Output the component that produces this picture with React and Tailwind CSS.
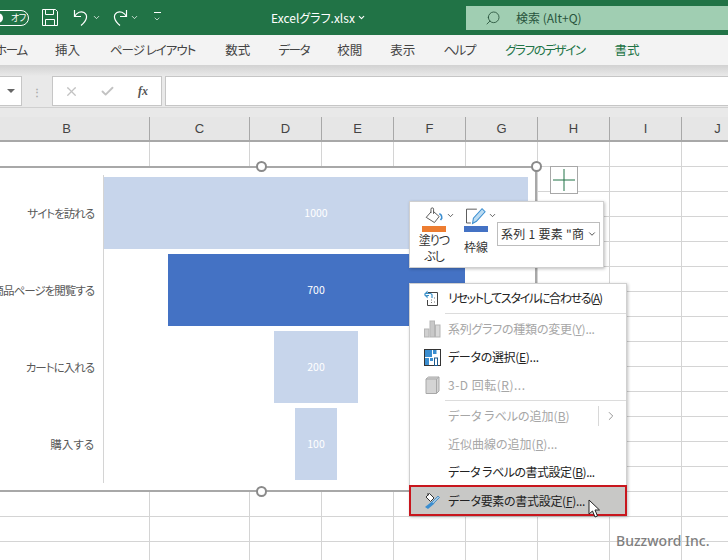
import React from "react";
import { ChevronDown, ChevronRight, Search, X, Check } from "lucide-react";

const columns = [
  { name: "B", width: "w-[150px]", align: "pr-[16px]" },
  { name: "C", width: "w-[100px]" },
  { name: "D", width: "w-[72px]" },
  { name: "E", width: "w-[72px]" },
  { name: "F", width: "w-[72px]" },
  { name: "G", width: "w-[72px]" },
  { name: "H", width: "w-[72px]" },
  { name: "I", width: "w-[72px]" },
  { name: "J", width: "w-[72px]" },
];

const tabs = [
  { text: "ホーム", cls: "tracking-[-1.3px]" },
  { text: "挿入" },
  { text: "ページ レイアウト", cls: "ml-[2px] tracking-[-1px]" },
  { text: "数式", cls: "ml-[2px]" },
  { text: "データ", cls: "tracking-[-1.3px]" },
  { text: "校閲" },
  { text: "表示" },
  { text: "ヘルプ", cls: "tracking-[-1.3px]" },
  { text: "グラフのデザイン", cls: "ml-[2px] tracking-[-1.4px] text-[#217346]" },
  { text: "書式", cls: "ml-[2px] text-[#217346]" },
];

const bars = [
  { label: "サイトを訪れる", value: 1000, cls: "w-[424px] bg-[#c7d5eb]", track: "tracking-[-1px]" },
  { label: "商品ページを閲覧する", value: 700, cls: "w-[297px] bg-[#4472c4]", track: "tracking-[-1px]" },
  { label: "カートに入れる", value: 200, cls: "w-[84px] bg-[#c7d5eb]", track: "tracking-[-1px]" },
  { label: "購入する", value: 100, cls: "w-[42px] bg-[#c7d5eb]", track: "" },
];

const ResetIcon = () => (
  <svg width="18" height="18" viewBox="0 0 18 18" fill="none">
    <path d="M5 3.500h9.500v13H4.500V11" stroke="#444" />
    <path d="M1.500 5.500 4 3v1.500h3.500A2 2 0 0 1 9 7v2M1.500 5.500 4 8V6.500h2" stroke="#3a8fc8" strokeWidth="1.200" />
    <path d="M8 11h1M8 13.500h1M11 9h1M11 13h1" stroke="#777" />
  </svg>
);

const ChartTypeIcon = () => (
  <svg width="17" height="18" viewBox="0 0 17 18">
    <rect x="0.500" y="9" width="4.500" height="8" fill="#d0d0d0" stroke="#b5b5b5" />
    <rect x="6" y="1" width="4.500" height="16" fill="#c8c8c8" stroke="#b5b5b5" />
    <rect x="11.500" y="5" width="4.500" height="12" fill="#d8d8d8" stroke="#b5b5b5" />
  </svg>
);

const SelectDataIcon = () => (
  <svg width="17" height="17" viewBox="0 0 17 17">
    <rect x="0.500" y="0.500" width="16" height="16" fill="#fff" stroke="#333" />
    <rect x="1" y="1" width="7" height="7" fill="#3b8ed0" />
    <rect x="9" y="1" width="3.500" height="4" fill="#3b8ed0" />
    <rect x="1" y="9" width="4" height="7" fill="#3b8ed0" />
    <rect x="6" y="9" width="3" height="3" fill="#3b8ed0" />
    <path d="M8.500 1v8M1 8.500h11.500" stroke="#fff" />
    <rect x="10.500" y="9" width="3" height="7.500" fill="#fff" stroke="#1e5a8c" />
  </svg>
);

const RotateIcon = () => (
  <svg width="15" height="18" viewBox="0 0 15 18">
    <path d="M1 3 3.500 1H14v14l-2.500 2.500H1Z" fill="#d4d4d4" stroke="#a8a8a8" />
    <path d="M1 3h10.500v14.500M11.500 3 14 1" fill="none" stroke="#a8a8a8" />
  </svg>
);

const FormatIcon = () => (
  <svg width="18" height="18" viewBox="0 0 18 18" fill="none">
    <path d="M3 5 6.500 1.500 11 6 7.500 9.500Z" fill="#fff" stroke="#333" />
    <path d="M5 3.500V1" stroke="#333" />
    <path d="M2 15 9 9.500 11.500 11.500 5 17Z" fill="#3b8ed0" />
    <path d="M9 10 15 4l1.500 1.500-6 6" fill="#9cc7e6" stroke="#2a77b5" strokeWidth="0.700" />
  </svg>
);

const FillIcon = () => (
  <svg width="24" height="19" viewBox="0 0 24 22" fill="none">
    <path d="M3 12 10 4l8 7-5.500 7Z" fill="#fff" stroke="#444" />
    <path d="M8.500 7V2.500a1.500 1.500 0 0 1 3 0V8" fill="#fff" stroke="#444" />
    <path d="M18 8c2 0 3 2 3 5l-1.500 2" stroke="#3b8ed0" strokeWidth="1.800" />
  </svg>
);

const PenIcon = () => (
  <svg width="24" height="19" viewBox="0 0 24 22" fill="none">
    <path d="M13 2.500H1v16h5" stroke="#444" />
    <path d="M8 19 9 13 19 2l3.500 3.500-10 11Z" fill="#bcdcf2" stroke="#3b8ed0" strokeWidth="1.200" />
  </svg>
);

const MenuItem = ({ icon, children, disabled, arrow, selected, track = "" }) => (
  <div
    className={`flex items-center ${
      selected
        ? "h-[31px] -my-[1px] -mx-[1px] pl-[14px] pr-[9px] bg-[#c8c8c6] outline-2 -outline-offset-2 outline-[#c8161d]"
        : "h-[28px] pl-[13px] pr-[8px]"
    } ${disabled ? "text-[#a6a6a6]" : "text-[#222]"}`}
  >
    <span className="w-[18px] h-[18px] flex items-center justify-center mr-[7px]">{icon}</span>
    <span className={`flex-1 whitespace-nowrap ${track}`}>{children}</span>
    {arrow && (
      <span className="flex items-center h-[20px] border-l border-[#d8d8d8] pl-[5px]">
        <ChevronRight size={14} strokeWidth={1.500} className="text-[#888]" />
      </span>
    )}
  </div>
);

const Sep = () => <div className="h-[1px] bg-[#dcdcdc] ml-[35px] my-[1px]" />;

export default function App() {
  return (
    <div className="relative w-[728px] h-[560px] overflow-hidden bg-white [font-family:'Noto_Sans_CJK_JP','Noto_Sans',sans-serif] [font-feature-settings:'palt'] text-[12px]">
      {/* title bar */}
      <div className="h-[35px] bg-[#217346] text-white flex items-center relative">
        <div className="-ml-[12px] w-[41px] h-[16px] shrink-0 rounded-full border border-white flex items-center">
          <span className="w-[10px] h-[10px] ml-[4px] rounded-full bg-white" />
          <span className="ml-[8px] text-[9px] leading-none tracking-[-0.500px]">オフ</span>
        </div>
        <svg className="ml-[13px] shrink-0" width="16" height="17" viewBox="0 0 16 17" fill="none" stroke="#fff">
          <path d="M0.500 0.500h13l2 2v14H0.500Z" />
          <path d="M3.500 0.500v5h8v-5M3.500 16.500v-6h9v6" />
        </svg>
        <svg className="ml-[14px] shrink-0" width="17" height="17" viewBox="0 0 17 17" fill="none" stroke="#fff" strokeWidth="1.200">
          <path d="M2.500 1v6.500H9" />
          <path d="M2.500 7.500C5 3 9 2 12 3.500c4 2.500 3.500 7.500-3 13" />
        </svg>
        <ChevronDown className="ml-[3px] shrink-0" size={9} />
        <svg className="ml-[11px] shrink-0" width="17" height="17" viewBox="0 0 17 17" fill="none" stroke="#fff" strokeWidth="1.200">
          <path d="M14.500 1v6.500H8" />
          <path d="M14.500 7.500C12 3 8 2 5 3.500c-4 2.500-3.500 7.500 3 13" />
        </svg>
        <ChevronDown className="ml-[1px] shrink-0" size={9} />
        <span className="ml-[14px] flex flex-col items-center gap-[2px] shrink-0">
          <span className="w-[7px] h-[1px] bg-white" />
          <ChevronDown size={8} />
        </span>
        <span className="ml-[110px] w-[84px] text-[12px] whitespace-nowrap shrink-0">Excelグラフ.xlsx</span>
        <ChevronDown className="ml-[2px] shrink-0" size={9} strokeWidth={3} />
        <div className="ml-[100px] w-[263px] h-[24px] shrink-0 bg-[#a0ceb2] flex items-center text-[#28543c]">
          <Search className="ml-[19px] -scale-x-100" size={16} strokeWidth={1.300} />
          <span className="ml-[15px] text-[12px]">検索 (Alt+Q)</span>
        </div>
      </div>

      {/* ribbon tabs */}
      <div className="h-[30px] bg-[#f3f3f3] flex items-center pl-0 gap-[28px] text-[12.500px] text-[#444] overflow-hidden">
        {tabs.map((tab, i) => (
          <span key={tab.text} className={`whitespace-nowrap ${i === 0 ? "-ml-[5px]" : ""} ${tab.cls || ""}`}>
            {tab.text}
          </span>
        ))}
      </div>
      <div className="h-[11px] bg-gradient-to-b from-[#d2d2d2] to-[#e9e9e9]" />

      {/* formula bar */}
      <div className="h-[31px] bg-[#e9e9e9] flex items-stretch pb-[1px]">
        <div className="w-[22px] bg-white border border-l-0 border-[#c6c6c6] flex items-center justify-end pr-[6px]">
          <span className="w-0 h-0 border-x-[4px] border-x-transparent border-t-[4px] border-t-[#666]" />
        </div>
        <div className="w-[30px] flex items-center justify-center text-[#aaa] text-[10px] font-bold">⋮</div>
        <div className="w-[110px] bg-white border border-[#c6c6c6] flex items-center text-[#c2c2c2]">
          <X className="ml-[11px]" size={15} strokeWidth={2} />
          <Check className="ml-[21px]" size={15} strokeWidth={3} />
          <span className="ml-[23px] [font-family:'Liberation_Serif',serif] italic font-bold text-[#555] text-[12px]">fx</span>
        </div>
        <div className="flex-1 ml-[3px] bg-white border border-r-0 border-[#c6c6c6]" />
      </div>

      {/* sheet */}
      <div className="h-[10px] bg-[#e9e9e9] border-t border-[#d0d0d0]" />
      <div className="flex h-[25px] bg-[#e6e6e6] border-b-2 border-[#a8a8a8] text-[13px] text-[#444] [font-family:'Liberation_Sans',sans-serif]">
        {columns.map((col) => (
          <div
            key={col.name}
            className={`${col.width} shrink-0 flex items-center justify-center border-r border-[#a8a8a8] ${col.align || ""}`}
          >
            {col.name}
          </div>
        ))}
      </div>
      {Array.from({ length: 17 }, (_, r) => (
        <div key={r} className="flex h-[25px]">
          {columns.map((col) => (
            <div key={col.name} className={`${col.width} shrink-0 border-r border-b border-[#d4d4d4]`} />
          ))}
        </div>
      ))}

      {/* chart */}
      <div className="absolute -left-[3px] top-[166px] w-[540px] h-[326px] bg-white border-2 border-[#a8a8a8] flex">
        <div className="w-[95px] mt-[10px] flex flex-col gap-[5px] text-[11.500px] text-[#595959]">
          {bars.map((bar) => (
            <div key={bar.label} className={`h-[72px] flex items-center justify-end whitespace-nowrap ${bar.track}`}>
              {bar.label}
            </div>
          ))}
        </div>
        <div className="w-[10px] my-[7px] border-r border-[#d4d4d4]" />
        <div className="w-[424px] mt-[9px] flex flex-col items-center gap-[5px] text-[10.500px] text-white">
          {bars.map((bar) => (
            <div key={bar.value} className={`${bar.cls} h-[72px] flex items-center justify-center`}>
              {bar.value}
            </div>
          ))}
        </div>
      </div>
      <span className="absolute left-[256px] top-[161px] w-[11px] h-[11px] rounded-full bg-white border-2 border-[#8a8a8a]" />
      <span className="absolute left-[531px] top-[161px] w-[11px] h-[11px] rounded-full bg-white border-2 border-[#8a8a8a]" />
      <span className="absolute left-[256px] top-[486px] w-[11px] h-[11px] rounded-full bg-white border-2 border-[#8a8a8a]" />

      {/* chart elements button */}
      <div className="absolute left-[550px] top-[166px] w-[28px] h-[28px] bg-white border border-[#a8a8a8] flex items-center justify-center">
        <svg width="22" height="22" viewBox="0 0 22 22" stroke="#217346">
          <path d="M11 0v22M0 11h22" />
        </svg>
      </div>

      {/* mini toolbar */}
      <div className="absolute left-[409px] top-[201px] w-[195px] h-[67px] bg-white border border-[#d0d0d0] shadow-[1px_1px_3px_rgba(0,0,0,0.250)] flex text-[12px] text-[#333]">
        <div className="w-[42px] shrink-0 ml-[12px] mt-[5px] flex flex-col items-start">
          <div className="flex items-end shrink-0">
            <FillIcon />
            <ChevronDown size={9} strokeWidth={2} className="mb-[6px]" />
          </div>
          <div className="w-[24px] h-[6px] shrink-0 bg-[#ed7d31]" />
          <div className="w-[24px] leading-[16px] text-center flex flex-col items-center whitespace-nowrap tracking-[-1px]">
            <span>塗りつ</span>
            <span>ぶし</span>
          </div>
        </div>
        <div className="w-[33px] shrink-0 mt-[5px] flex flex-col items-start">
          <div className="flex items-end shrink-0">
            <PenIcon />
            <ChevronDown size={9} strokeWidth={2} className="mb-[6px]" />
          </div>
          <div className="w-[24px] h-[6px] shrink-0 bg-[#4472c4]" />
          <span className="w-[24px] mt-[6px] text-center whitespace-nowrap">枠線</span>
        </div>
        <div className="mt-[20px] w-[103px] h-[24px] shrink-0 border border-[#bdbdbd] flex items-center justify-between pl-[3px] pr-[2px] whitespace-nowrap text-[12px] tracking-[0.300px]">
          <span>系列 1 要素 "商</span>
          <ChevronDown size={10} strokeWidth={2} />
        </div>
      </div>

      {/* context menu */}
      <div className="absolute left-[409px] top-[283px] w-[218px] bg-white border border-[#d0d0d0] shadow-[1px_1px_3px_rgba(0,0,0,0.250)] text-[12px]">
        <MenuItem icon={<ResetIcon />} track="tracking-[-1.300px]">リセットしてスタイルに合わせる(<u>A</u>)</MenuItem>
        <Sep />
        <MenuItem icon={<ChartTypeIcon />} disabled track="tracking-[-0.250px]">系列グラフの種類の変更(<u>Y</u>)...</MenuItem>
        <MenuItem icon={<SelectDataIcon />} track="tracking-[-0.300px]">データの選択(<u>E</u>)...</MenuItem>
        <MenuItem icon={<RotateIcon />} disabled track="tracking-[0.500px]">3-D 回転(<u>R</u>)...</MenuItem>
        <Sep />
        <MenuItem disabled arrow>データ ラベルの追加(<u>B</u>)</MenuItem>
        <MenuItem disabled>近似曲線の追加(<u>R</u>)...</MenuItem>
        <MenuItem track="tracking-[-0.500px]">データ ラベルの書式設定(<u>B</u>)...</MenuItem>
        <MenuItem icon={<FormatIcon />} selected track="tracking-[-0.300px]">データ要素の書式設定(<u>F</u>)...</MenuItem>
      </div>

      {/* mouse cursor */}
      <svg className="absolute left-[588px] top-[499px]" width="13" height="20" viewBox="0 0 13 20">
        <path d="M1 1v14l3.500-3 2.500 6 2.500-1-2.500-6h4.500Z" fill="#fff" stroke="#222" />
      </svg>

      {/* watermark */}
      <span className="absolute left-[616px] top-[530px] text-[14px] font-medium text-[#7f7f7f] [font-family:'Noto_Sans',sans-serif]">
        Buzzword Inc.
      </span>
    </div>
  );
}
